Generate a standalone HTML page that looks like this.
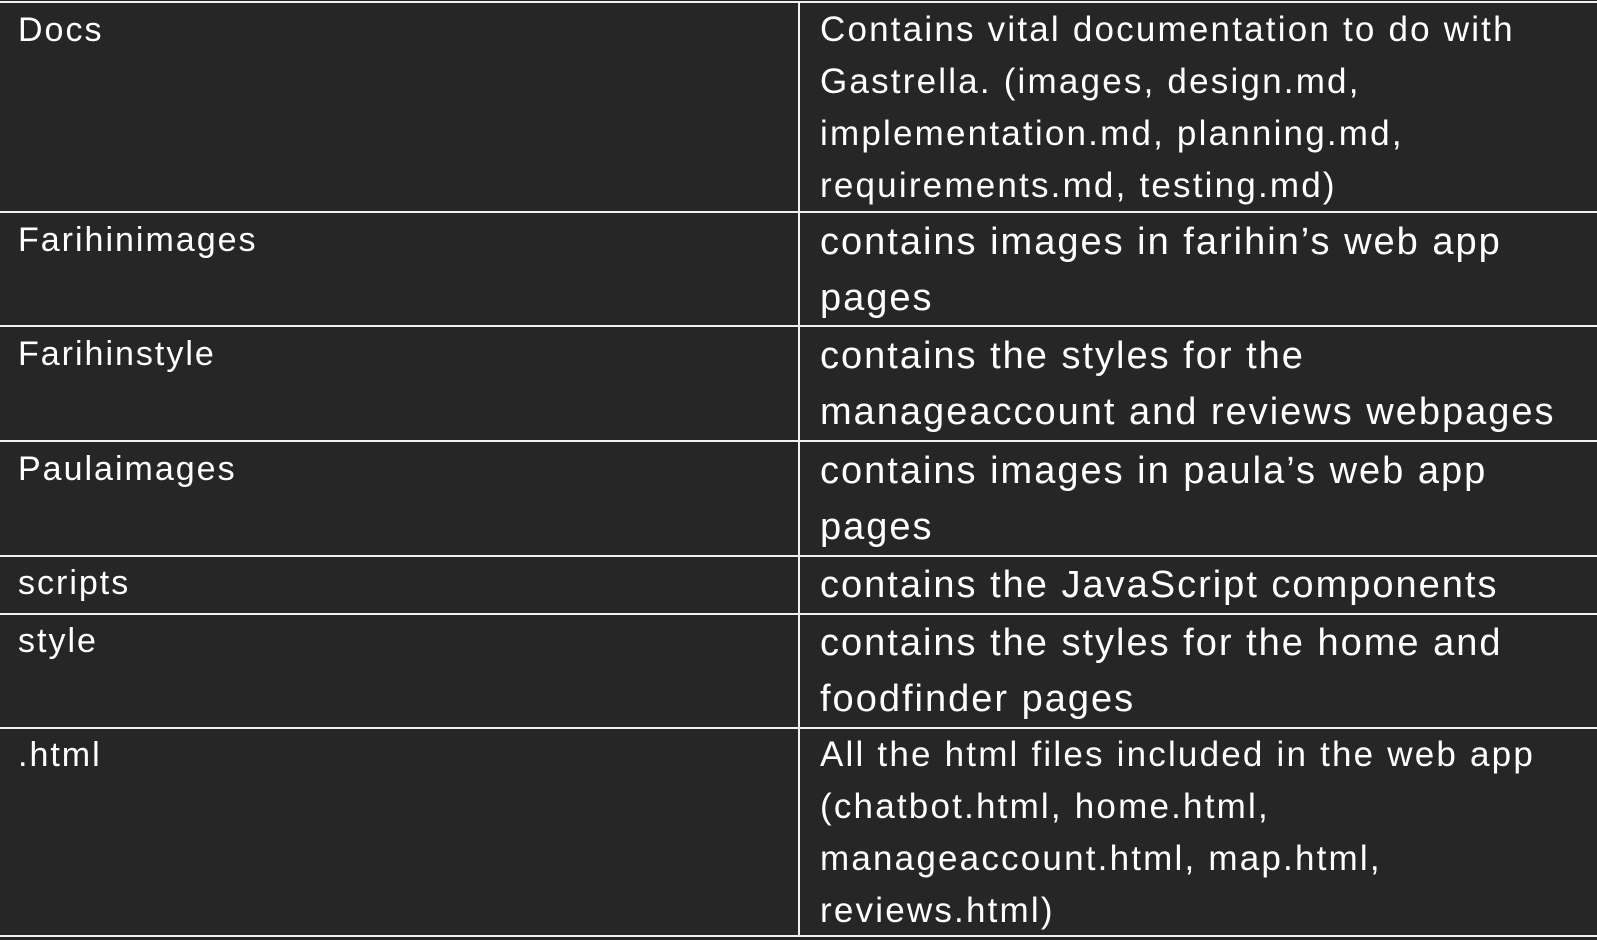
<!DOCTYPE html>
<html><head><meta charset="utf-8"><style>
html,body{margin:0;padding:0;background:#262626;width:1597px;height:940px;overflow:hidden;position:relative;font-family:"Liberation Sans",sans-serif;color:#fff}
.h{position:absolute;left:0;width:1597px;height:2px;background:#f2f2f2}
.v{position:absolute;left:798px;width:2px;top:2px;height:934px;background:#f2f2f2}
.t{position:absolute;white-space:nowrap}
.l{left:18px;font-size:34px;line-height:52px;letter-spacing:2px}
.s{left:820px;font-size:35px;line-height:52px;letter-spacing:2.2px}
.b{left:820px;font-size:38px;line-height:56px;letter-spacing:2px}
</style></head><body>
<div class="h" style="top:1px"></div>
<div class="h" style="top:211px"></div>
<div class="h" style="top:325px"></div>
<div class="h" style="top:440px"></div>
<div class="h" style="top:555px"></div>
<div class="h" style="top:613px"></div>
<div class="h" style="top:727px"></div>
<div class="h" style="top:935px"></div>
<div class="v"></div>

<div class="t l" style="top:4px">Docs</div>
<div class="t s" style="top:4px">Contains vital documentation to do with<br>Gastrella. (images, design.md,<br>implementation.md, planning.md,<br>requirements.md, testing.md)</div>

<div class="t l" style="top:214px">Farihinimages</div>
<div class="t b" style="top:214px">contains images in farihin’s web app<br>pages</div>

<div class="t l" style="top:328px">Farihinstyle</div>
<div class="t b" style="top:328px">contains the styles for the<br>manageaccount and reviews webpages</div>

<div class="t l" style="top:443px">Paulaimages</div>
<div class="t b" style="top:443px">contains images in paula’s web app<br>pages</div>

<div class="t l" style="top:557px">scripts</div>
<div class="t b" style="top:557px">contains the JavaScript components</div>

<div class="t l" style="top:615px">style</div>
<div class="t b" style="top:615px">contains the styles for the home and<br>foodfinder pages</div>

<div class="t l" style="top:729px">.html</div>
<div class="t s" style="top:729px">All the html files included in the web app<br>(chatbot.html, home.html,<br>manageaccount.html, map.html,<br>reviews.html)</div>
</body></html>
